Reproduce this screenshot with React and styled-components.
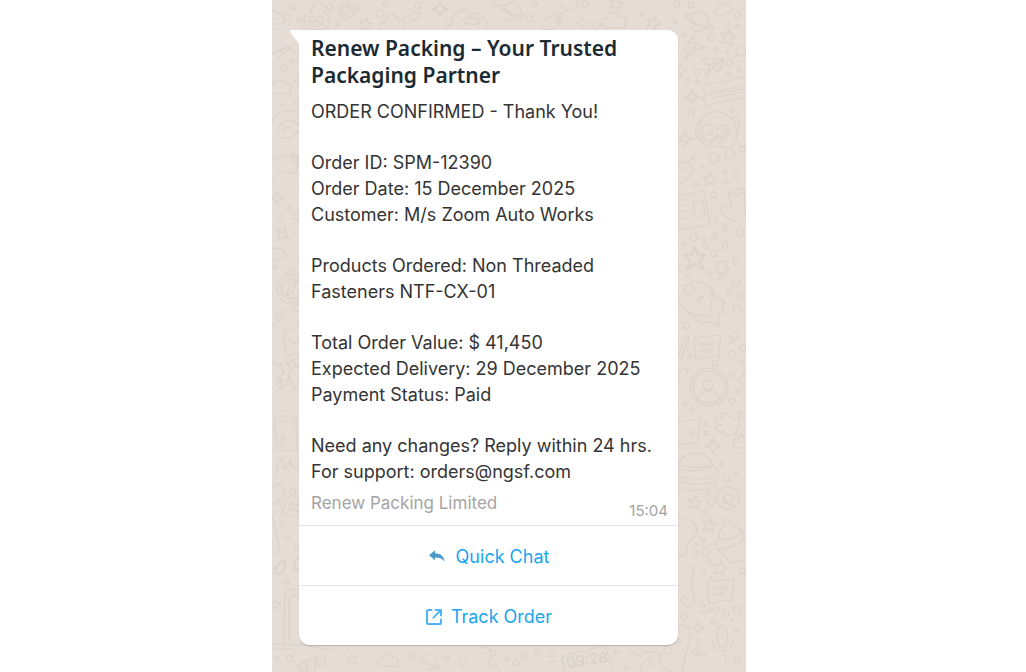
import React from 'react'
import styled, { createGlobalStyle } from 'styled-components'

const GlobalStyle = createGlobalStyle`
    * {
        box-sizing: border-box;
    }

    body {
        margin: 0;
        background-color: #fff;
        font-family: Inter, 'Liberation Sans', sans-serif;
    }
`

const Page = styled.main`
    display: grid;
    grid-template-columns: 272fr 474fr 280fr;
    min-height: 100vh;
`

const Chat = styled.section`
    grid-column: 2;
    position: relative;
    padding: 30px 68px 26px 27px;
    background-color: #e4dcd5;
    overflow: hidden;
`

const Wallpaper = styled.svg`
    position: absolute;
    inset: 0;
    width: 100%;
    height: 100%;
    fill: none;
    stroke: #dbd2c9;
    stroke-width: 1.2;
    stroke-linecap: round;
    stroke-linejoin: round;
`

const Bubble = styled.article`
    position: relative;
    background-color: #fff;
    border-radius: 0 10px 10px 10px;
    box-shadow: 0 1px 1px rgba(0, 0, 0, 0.2);
`

const Tail = styled.svg`
    position: absolute;
    top: 0;
    right: 100%;
    width: 9px;
    height: 14px;
    fill: #fff;
`

const Message = styled.div`
    padding: 5px 10px 3px 12px;
`

const Title = styled.h1`
    margin: 0 0 10px;
    font-family: 'Noto Sans', 'Open Sans', sans-serif;
    font-size: 21px;
    font-weight: 600;
    line-height: 27px;
    color: #1c2b33;
`

const Body = styled.div`
    display: flex;
    flex-direction: column;
    gap: 25px;
`

const Paragraph = styled.p`
    margin: 0;
    font-size: 18px;
    line-height: 26px;
    color: #343434;
    white-space: pre-line;
`

const Footer = styled.footer`
    display: flex;
    justify-content: space-between;
    align-items: flex-end;
    padding-top: 5px;
    color: #a4a4a4;
`

const Sender = styled.span`
    padding-bottom: 6px;
    font-size: 17px;
    line-height: 26px;
`

const Time = styled.time`
    font-size: 15px;
    line-height: 22px;
`

const ActionButton = styled.button`
    display: flex;
    justify-content: center;
    align-items: center;
    gap: ${props => props.$gap}px;
    width: 100%;
    height: 60px;
    padding: 2px 0 0;
    border: 0;
    border-top: 1px solid #e4e6ea;
    background: none;
    font-family: inherit;
    font-size: 18px;
    color: #1ba5ee;
    cursor: pointer;
`

const ActionIcon = styled.svg`
    width: 18px;
    height: 18px;
    fill: none;
    stroke: #4db4f3;
    stroke-width: 2;
    stroke-linecap: round;
    stroke-linejoin: round;
`

const paragraphs = [
    'ORDER CONFIRMED - Thank You!',
    'Order ID: SPM-12390\nOrder Date: 15 December 2025\nCustomer: M/s Zoom Auto Works',
    'Products Ordered: Non Threaded Fasteners NTF-CX-01',
    'Total Order Value: $ 41,450\nExpected Delivery: 29 December 2025\nPayment Status: Paid',
    'Need any changes? Reply within 24 hrs.\nFor support: orders@ngsf.com',
]

const shapes = {
    star: 'M0-7l2 5 5 0-4 4 2 5-5-3-5 3 2-5-4-4 5 0z',
    spark: 'M0-7Q1-1 7 0Q1 1 0 7Q-1 1-7 0Q-1-1 0-7z',
    bolt: 'M-2-8L5-8L2-2L6-2L-3 8L-1 1L-6 1z',
    cloud: 'M-9 6C-15 5-13-3-8-2C-8-9 2-10 4-4C9-6 12 0 9 2C11 6 8 7 6 6z',
    planet: 'M-9-5A10 10 0 1 1-8 7M-9-5C-20-10-12 0 0 5C14 11 17 7 10 2M-9-3C-7 1 4 6 10 5',
    drop: 'M1-5C-3 0-3 4 0 4S4 0 1-5z',
    note: 'M-14-9L13-12L11 6L12 11L8 9L-12 12zM-8-3L6-5L6-3L-8-1zM-7 3L4 1L4 3L-7 5z',
}

// [shape, x, y, scale, rotation]
const doodles = [
    ['cloud', 274, 18, 1, 0], ['star', 366, 24, 0.9, 12], ['cloud', 394, 24, 1.1, 0],
    ['spark', 440, 9, 1.1, 0], ['planet', 512, 11, 0.9, 0], ['star', 616, 3, 1, 10],
    ['spark', 582, 23, 0.8, 0], ['bolt', 597, 27, 0.7, 0], ['cloud', 615, 21, 1.1, 0],
    ['star', 653, 23, 1, 20], ['planet', 699, 21, 1, 0], ['cloud', 724, 9, 0.8, -20],
    ['star', 728, 37, 1.1, 10], ['bolt', 690, 51, 1.1, 10], ['spark', 681, 70, 0.9, 0],
    ['spark', 692, 97, 1.1, 0], ['spark', 685, 139, 1.1, 0], ['star', 710, 179, 1, 0],
    ['star', 695, 258, 1.6, 0], ['bolt', 722, 271, 1.2, 0], ['drop', 714, 236, 1, 0],
    ['drop', 725, 228, 0.9, -20], ['drop', 725, 245, 1, 0], ['bolt', 734, 338, 0.8, 10],
    ['note', 708, 347, 1, 0], ['spark', 713, 446, 1.1, 0], ['star', 695, 502, 1, 10],
    ['star', 709, 525, 1, 10], ['star', 720, 568, 1, 10], ['note', 721, 591, 1, 0],
    ['spark', 698, 628, 0.9, 0], ['spark', 744, 379, 1, 0], ['drop', 715, 220, 0.6, 0],
    ['cloud', 281, 88, 1, 0], ['spark', 277, 198, 1, 0], ['spark', 282, 234, 1.1, 30],
    ['spark', 292, 365, 1, 20], ['star', 297, 308, 0.8, 0], ['drop', 280, 567, 1.7, 25],
    ['drop', 297, 564, 1.5, 0], ['star', 275, 604, 0.8, 0], ['star', 303, 667, 0.9, 0],
    ['note', 296, 508, 0.9, 20], ['drop', 282, 441, 1, 0], ['planet', 430, 662, 0.8, 0],
    ['star', 352, 659, 0.8, 0], ['cloud', 389, 661, 0.9, 0],
]

// [x, y, radius]
const dots = [
    [287, 17, 3], [293, 7, 3], [299, 20, 2], [330, 7, 3], [338, 24, 2], [357, 9, 2], [380, 14, 4],
    [385, 4, 2], [418, 6, 3], [448, 23, 3], [463, 8, 2], [495, 5, 2], [530, 18, 3], [535, 4, 2],
    [585, 4, 3], [642, 14, 2], [677, 4, 3], [691, 5, 3], [675, 21, 2], [738, 15, 3], [727, 24, 2],
    [738, 26, 2], [684, 35, 2], [693, 37, 2], [711, 38, 3], [702, 48, 2], [716, 49, 2], [728, 52, 1],
    [741, 51, 5], [730, 63, 3], [739, 70, 2], [697, 72, 3], [707, 75, 2], [728, 74, 2], [688, 81, 2],
    [698, 82, 2], [732, 110, 2], [691, 113, 3], [742, 149, 3], [693, 157, 2], [702, 166, 1], [725, 172, 2],
    [736, 175, 3], [695, 185, 2], [714, 195, 3], [726, 181, 2], [694, 237, 4], [684, 244, 2], [704, 240, 2],
    [706, 247, 2], [740, 232, 4], [714, 254, 3], [736, 262, 3], [709, 273, 2], [736, 283, 4], [729, 291, 2],
    [739, 296, 3], [737, 309, 4], [686, 326, 3], [690, 356, 2], [715, 363, 3], [732, 355, 4], [743, 348, 3],
    [741, 361, 2], [731, 375, 2], [738, 391, 2], [732, 401, 3], [685, 404, 2], [692, 410, 2], [706, 424, 2],
    [706, 433, 2], [722, 464, 2], [727, 479, 3], [736, 474, 2], [708, 494, 2], [711, 502, 4], [704, 512, 2],
    [703, 540, 2], [696, 544, 1], [706, 552, 4], [696, 553, 2], [709, 561, 2], [742, 571, 3], [704, 571, 2],
    [711, 577, 1], [703, 605, 2], [704, 612, 2], [711, 610, 2], [718, 609, 2], [726, 614, 3], [737, 609, 4],
    [713, 622, 2], [732, 620, 1], [684, 617, 3], [736, 630, 2], [698, 643, 2], [696, 652, 3], [703, 655, 2],
    [737, 661, 3], [678, 641, 2], [493, 653, 3], [507, 658, 2], [525, 655, 3], [516, 663, 3], [537, 653, 2],
    [616, 652, 2], [626, 668, 2], [668, 650, 4], [283, 51, 2], [292, 61, 2], [284, 68, 3], [297, 80, 2],
    [282, 104, 1], [297, 103, 2], [290, 208, 2], [280, 216, 2], [296, 217, 3], [275, 267, 2], [294, 232, 1],
    [293, 492, 3], [282, 523, 2], [287, 537, 2], [297, 547, 2], [275, 568, 1], [287, 582, 2], [277, 658, 2],
    [290, 658, 3], [411, 656, 3], [447, 658, 2], [463, 663, 3],
]

// Larger one-off drawings of the wallpaper
const drawings = [
    // smiling pile
    'M305 22C301 16 309 12 312 13C309 7 317 7 314 1C322 1 326 7 323 12C330 13 330 18 327 21C333 25 326 31 316 29C304 30 299 25 305 22M309 19a3 3 0 1 0 6 0a3 3 0 1 0-6 0M317 19a3 3 0 1 0 6 0a3 3 0 1 0-6 0M312 25Q317 28 321 24',
    // gear
    'M344 3l4 0 1 3 4-1 2 4-3 2 2 4-4 2-2-1-3 3-3-2 0-3-4-1 1-4 3-1-1-4zM342 10a4 4 0 1 0 8 0a4 4 0 1 0-8 0',
    // heart
    'M413 21C406 15 414 9 416 14C420 8 425 16 413 21z',
    // doughnut
    'M453 24C450 10 463 9 472 13C486 14 491 23 484 32M463 20C466 15 478 18 479 22C477 26 465 25 463 20M457 16l3 1M469 14l2 2M481 18l-2 2',
    // shooting star
    'M542 27C543 17 553 14 562 13L556 18L562 17L556 22L563 21C556 30 547 32 542 27M560 3a9 9 0 0 0 18-4',
    // paper plane
    'M701 58L724 60L719 72L712 68L708 72L709 65zM709 65L723 60L712 68',
    // speech note
    'M705 85L746 77M746 97L711 104L706 107L705 101L702 99L706 94L703 88L705 85M710 92L745 86M710 94L745 89M712 98L744 92',
    // monkey
    'M700 132C695 105 731 107 736 126C741 144 729 151 721 146L710 146C700 145 697 137 700 132M700 139C692 134 696 120 703 122M732 117C740 116 741 128 736 132M702 133C703 120 713 124 717 129C724 120 733 130 728 135C724 141 717 134 717 134C711 146 701 140 702 133M708 133a2 2 0 1 0 4 0a2 2 0 1 0-4 0M723 131a2 2 0 1 0 4 0a2 2 0 1 0-4 0M711 144C713 136 717 136 717 140C719 134 725 139 720 144M709 158a5 5 0 1 0 10 0a5 5 0 1 0-10 0M725 155a5 5 0 1 0 10 0a5 5 0 1 0-10 0',
    // newspaper
    'M678 196L704 191L710 225L678 230M693 203L703 201L705 215L695 217zM678 206L687 205M678 212L688 211M678 219L690 218',
    // coffee pot
    'M728 192L744 188L746 221M728 192L732 208L719 206Q724 220 736 221M730 193Q737 197 745 191M679 164C689 157 696 167 691 173Q688 180 679 184M682 168l2 0M686 169l1 1',
    // guitar and flame
    'M678 270C686 271 688 280 694 282C706 281 716 291 711 303L710 309C717 314 706 318 700 314C691 318 684 308 678 302M684 289a5 5 0 1 0 10 0a5 5 0 1 0-10 0M697 300l5-5 1 2-5 5zM711 286Q714 299 726 302Q719 303 725 314Q716 308 719 327Q710 318 701 324Q696 316 688 313',
    // avatar
    'M690 387a19 19 0 1 0 38 0a19 19 0 1 0-38 0M693 387a16 16 0 1 0 32 0a16 16 0 1 0-32 0M703 385a5 5 0 1 0 10 0a5 5 0 1 0-10 0M697 401C699 388 716 388 721 401',
    // pens and clips
    'M678 356L686 337Q690 334 688 341L681 359M678 373Q687 365 688 371Q687 376 679 381M678 422L700 419L698 442L678 445M689 435l5-5-1 6',
    // hand and bottle
    'M746 415L740 412L738 428L733 448L746 448M738 418L746 417M737 426L746 426M739 440Q740 430 744 438M734 420C716 404 719 416 723 420C710 413 714 423 721 425C711 425 714 431 724 431C717 435 727 438 736 433',
    // burger
    'M679 466C681 449 707 448 713 465Q700 469 679 466M679 469Q693 474 714 466Q722 475 713 477Q699 482 679 476M679 481Q698 488 717 481Q716 489 704 490L679 489M686 459l1 0M692 456l1 0M699 459l1 0M704 456l1 0',
    // cursor badge
    'M717 498a11 11 0 1 0 22 0a11 11 0 1 0-22 0M724 493L735 497L730 500L732 505L729 506L727 501L724 504z',
    // cupcake
    'M717 549C711 542 719 538 720 538C715 530 727 529 724 518Q732 521 732 526Q738 524 741 532Q736 541 720 539M717 549Q734 550 746 538M719 550L731 563L746 560M741 529Q747 535 742 540',
    // blobs
    'M678 519C694 516 702 530 693 538Q685 543 687 553Q681 558 678 554M688 566Q694 563 693 578C689 587 697 596 694 604C687 609 678 604 683 595L688 600',
    // microphone
    'M717 631Q718 625 723 627Q727 627 727 633L728 642Q724 651 718 643zM712 639Q714 652 724 651Q733 649 733 639M724 651L726 661',
    // digital clock
    'M562 660Q562 656 569 654L600 647Q607 646 608 654L612 668M562 660L565 672',
    'M549 650l5 4M548 656l6 1M549 662l6-1M481 648Q490 646 492 654L488 664Q498 666 500 672M630 649Q634 658 642 654Q650 649 661 655Q657 665 670 672M642 672Q638 661 650 659Q650 667 655 665M678 625Q693 624 689 640L682 672',
    // left margin
    'M272 54L286 47Q293 46 298 60M276 60L293 45M273 121C280 106 300 109 302 118M278 133C278 118 296 116 300 128Q295 139 282 138M283 132Q283 126 292 128M272 159L291 155L299 157L296 173L279 171L272 181M292 158a2 4 0 1 0 5 0a2 4 0 1 0-5 0M272 249Q283 246 286 256Q278 258 272 261',
    'M277 289a14 14 0 1 0 28 0a14 14 0 1 0-28 0M281 289a10 10 0 1 0 20 0a10 10 0 1 0-20 0M286 296L290 286L297 281L293 291zM286 274a5 5 0 1 1 10 0',
    'M274 316Q283 306 286 312Q285 318 272 326M276 318L283 313M283 331L304 325M283 331L286 357L304 352M285 333L293 344L303 339M272 361l5 4 4-1 1 5 2 4-4 3-1 5-4-1M276 385L282 379L279 389L287 384L289 374L294 390L297 383',
    'M274 422L276 416L292 416L297 421M274 422L296 422L297 450L277 450zM274 422L277 450M275 475Q281 453 284 463Q282 476 291 459Q291 475 299 463M272 487Q284 479 284 491Q284 499 277 500L274 505M278 500L281 506M272 515L280 551L272 553',
    'M284 645L285 592Q286 588 294 590L304 590M289 642L289 600Q290 595 300 595M272 644L299 645L341 651M272 648L299 650M306 660l9 0 0 10-9 0zM317 656l8 0 0 9-8 0z',
]

const ChatWallpaper = () => (
    <Wallpaper viewBox="272 0 474 672" preserveAspectRatio="xMidYMin slice" aria-hidden="true">
        {drawings.map(d => <path d={d} key={d} />)}
        {doodles.map(([shape, x, y, scale, rotation]) => (
            <path
                d={shapes[shape]}
                transform={`translate(${x} ${y}) rotate(${rotation}) scale(${scale})`}
                key={`${shape}-${x}-${y}`}
            />
        ))}
        {dots.map(([x, y, r]) => <circle cx={x} cy={y} r={r} key={`${x}-${y}`} />)}
        <text
            x="567"
            y="668"
            transform="rotate(-8 567 668)"
            fontFamily="Inter, sans-serif"
            fontSize="15"
            fill="#d8cfc6"
            stroke="none"
        >
            09:28
        </text>
    </Wallpaper>
)

const ReplyIcon = () => (
    <ActionIcon viewBox="0 0 18 18" aria-hidden="true">
        <path d="M1 7.2L7 2.2V5.2C12.8 5.4 16 8.2 16.8 13.8C14.4 10.6 11.6 9.4 7 9.5V12.3z" fill="#4a9bc9" stroke="none" />
    </ActionIcon>
)

const OpenIcon = () => (
    <ActionIcon viewBox="0 0 18 18" aria-hidden="true">
        <path d="M6.4 2H3.6Q2 2 2 3.6V14.4Q2 16 3.6 16H14.4Q16 16 16 14.4V11.6M10.5 2H16V7.5M15.6 2.4L8.4 9.6" />
    </ActionIcon>
)

const App = () => {
    return (
        <>
            <GlobalStyle />
            <Page>
                <Chat>
                    <ChatWallpaper />
                    <Bubble>
                        <Tail viewBox="0 0 9 14" aria-hidden="true">
                            <path d="M9 0H1Q-1 0 0 2L9 14z" />
                        </Tail>
                        <Message>
                            <Title>Renew Packing – Your Trusted Packaging Partner</Title>
                            <Body>
                                {paragraphs.map(text => <Paragraph key={text}>{text}</Paragraph>)}
                            </Body>
                            <Footer>
                                <Sender>Renew Packing Limited</Sender>
                                <Time dateTime="15:04">15:04</Time>
                            </Footer>
                        </Message>
                        <ActionButton type="button" $gap={10}>
                            <ReplyIcon />
                            Quick Chat
                        </ActionButton>
                        <ActionButton type="button" $gap={8}>
                            <OpenIcon />
                            Track Order
                        </ActionButton>
                    </Bubble>
                </Chat>
            </Page>
        </>
    )
}

export default App
